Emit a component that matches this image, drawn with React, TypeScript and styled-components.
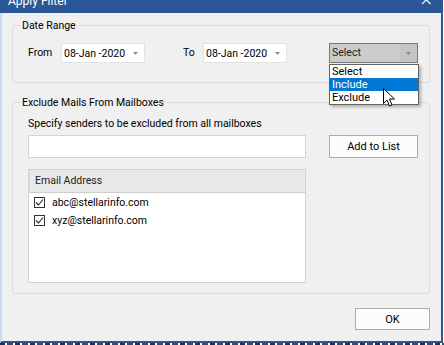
import React from "react";
import styled, { createGlobalStyle } from "styled-components";

const Global = createGlobalStyle`
  html, body { margin: 0; padding: 0; background: #ffffff; }
  body {
    font-family: Roboto, "Liberation Sans", Arial, sans-serif;
    font-size: 10.5px;
    color: #000;
  }
  * { box-sizing: border-box; }
`;

const Screen = styled.div`
  width: 444px;
  height: 345px;
  overflow: hidden;
  background: #ffffff;
  display: flex;
  flex-direction: column;
`;

const Window = styled.div`
  width: 443px;
  height: 343px;
  flex: none;
  display: flex;
  flex-direction: column;
  background: #f0f0f0;
  border-left: 2px solid #c9dcf1;
  border-right: 2px solid #2b5797;
  border-bottom: 2px solid #2b5797;
`;

const UnderStrip = styled.div`
  height: 2px;
  width: 444px;
  background: repeating-linear-gradient(
    90deg,
    #1d2f55 0 5px,
    #ffffff 5px 7px,
    #3a4a6a 7px 13px,
    #ffffff 13px 15px
  );
`;

const TitleBar = styled.div`
  height: 13px;
  flex: none;
  margin: 0 -2px;
  background: #2b5797;
  display: flex;
  align-items: flex-start;
  justify-content: space-between;
  padding: 0 12px 0 8px;
  overflow: hidden;
`;

const TitleText = styled.span`
  color: #ffffff;
  font-size: 12px;
  line-height: 12px;
  margin-top: -5px;
`;

const CloseGlyph = styled.svg`
  display: block;
  width: 9px;
  height: 5px;
`;

const Body = styled.div`
  flex: 1;
  display: flex;
  flex-direction: column;
  padding: 6px 11px 0 10px;
`;

const GroupBox = styled.fieldset<{ $h: number; $pt: number }>`
  margin: 0;
  min-width: 0;
  height: ${(p) => p.$h}px;
  border: 1px solid #dcdcdc;
  border-radius: 3px;
  padding: ${(p) => p.$pt}px 0 0 15px;
  display: flex;
  flex-direction: column;
  & + & {
    margin-top: 13px;
  }
`;

const Legend = styled.legend`
  padding: 0 2px;
  margin-left: -8px;
  line-height: 13px;
`;

const DateRow = styled.div`
  display: flex;
  align-items: center;
  height: 20px;
`;

const FieldLabel = styled.span<{ $w: number; $ml?: number }>`
  width: ${(p) => p.$w}px;
  margin-left: ${(p) => p.$ml ?? 0}px;
  flex: none;
  line-height: 20px;
`;

const DateBox = styled.div`
  width: 84px;
  height: 20px;
  flex: none;
  background: #ffffff;
  border: 1px solid #e2e2e2;
  display: flex;
  align-items: center;
  justify-content: space-between;
  padding: 0 6px 0 2px;
`;

const SmallArrow = styled.svg`
  display: block;
  width: 5px;
  height: 3px;
`;

const SelectWrap = styled.div`
  position: relative;
  margin-left: 42px;
  width: 89px;
  height: 20px;
  flex: none;
`;

const SelectBox = styled.div`
  width: 100%;
  height: 100%;
  background: #cccccc;
  border: 1px solid #7a7a7a;
  display: flex;
  align-items: stretch;
`;

const SelectText = styled.span`
  flex: 1;
  padding-left: 2px;
  line-height: 18px;
  color: #222;
`;

const SelectArrowCell = styled.span`
  width: 17px;
  background: #c4c4c4;
  display: flex;
  align-items: center;
  justify-content: center;
`;

const Dropdown = styled.ul`
  position: absolute;
  top: 21px;
  left: 0;
  width: 90px;
  margin: 0;
  padding: 0;
  list-style: none;
  background: #ffffff;
  border: 1px solid #646464;
  box-shadow: 2px 2px 3px rgba(0, 0, 0, 0.28);
  z-index: 2;
`;

const Option = styled.li<{ $active?: boolean }>`
  height: 13px;
  line-height: 13px;
  padding-left: 2px;
  font-size: 11px;
  background: ${(p) => (p.$active ? "#0078d7" : "transparent")};
  color: ${(p) => (p.$active ? "#ffffff" : "#000000")};
`;

const Cursor = styled.svg`
  position: absolute;
  left: 53px;
  top: 23px;
  width: 12px;
  height: 19px;
  z-index: 3;
`;

const Hint = styled.div`
  line-height: 13px;
`;

const InputRow = styled.div`
  display: flex;
  margin-top: 5px;
`;

const TextInput = styled.div`
  width: 278px;
  height: 23px;
  background: #ffffff;
  border: 1px solid #d4d4d4;
`;

const Button = styled.button<{ $w: number; $h: number }>`
  width: ${(p) => p.$w}px;
  height: ${(p) => p.$h}px;
  background: #fcfcfc;
  border: 1px solid #adadad;
  font-family: inherit;
  font-size: 11px;
  color: #000;
  padding: 0;
`;

const AddButton = styled(Button)`
  margin-left: 23px;
`;

const ListBox = styled.div`
  margin-top: 11px;
  width: 278px;
  height: 114px;
  background: #ffffff;
  border: 1px solid #d2d2d2;
  display: flex;
  flex-direction: column;
`;

const ListHeader = styled.div`
  height: 23px;
  background: #e9e9e9;
  border-bottom: 1px solid #cdcdcd;
  border-left: 1px solid #d8d8d8;
  padding-left: 5px;
  line-height: 22px;
  color: #222;
`;

const Rows = styled.div`
  padding-top: 1px;
`;

const Row = styled.div`
  height: 17.5px;
  display: flex;
  align-items: center;
  padding-left: 5px;
`;

const CheckBox = styled.span`
  width: 11px;
  height: 11px;
  border: 1px solid #333333;
  background: #ffffff;
  display: flex;
  align-items: center;
  justify-content: center;
  margin-right: 7px;
`;

const Footer = styled.div`
  display: flex;
  justify-content: flex-end;
  margin-top: 14px;
`;

const emails = ["abc@stellarinfo.com", "xyz@stellarinfo.com"];

const Arrow = () => (
  <SmallArrow viewBox="0 0 5 3">
    <path d="M0 0h5L2.5 3z" fill="#8a8a8a" />
  </SmallArrow>
);

export default function App() {
  return (
    <>
      <Global />
      <Screen>
        <Window>
          <TitleBar>
            <TitleText>Apply Filter</TitleText>
            <CloseGlyph viewBox="0 0 9 5">
              <path d="M0 -4.5L8.5 4M8.5 -4.5L0 4" stroke="#ffffff" strokeWidth="1.2" />
            </CloseGlyph>
          </TitleBar>
          <Body>
            <GroupBox $h={64} $pt={11}>
              <Legend>Date Range</Legend>
              <DateRow>
                <FieldLabel $w={33}>From</FieldLabel>
                <DateBox>
                  <span>08-Jan -2020</span>
                  <Arrow />
                </DateBox>
                <FieldLabel $w={20} $ml={38}>To</FieldLabel>
                <DateBox>
                  <span>08-Jan -2020</span>
                  <Arrow />
                </DateBox>
                <SelectWrap>
                  <SelectBox>
                    <SelectText>Select</SelectText>
                    <SelectArrowCell>
                      <Arrow />
                    </SelectArrowCell>
                  </SelectBox>
                  <Dropdown>
                    <Option>Select</Option>
                    <Option $active>Include</Option>
                    <Option>Exclude</Option>
                    <Cursor viewBox="0 0 12 19">
                      <path
                        d="M0.5 0.5V15.5L4 12L6.5 18L9 17L6.5 11H11.5Z"
                        fill="#ffffff"
                        stroke="#000000"
                        strokeWidth="1"
                        strokeLinejoin="miter"
                      />
                    </Cursor>
                  </Dropdown>
                </SelectWrap>
              </DateRow>
            </GroupBox>
            <GroupBox $h={198} $pt={8}>
              <Legend>Exclude Mails From Mailboxes</Legend>
              <Hint>Specify senders to be excluded from all mailboxes</Hint>
              <InputRow>
                <TextInput />
                <AddButton $w={89} $h={23}>Add to List</AddButton>
              </InputRow>
              <ListBox>
                <ListHeader>Email Address</ListHeader>
                <Rows>
                  {emails.map((e) => (
                    <Row key={e}>
                      <CheckBox>
                        <svg width="9" height="9" viewBox="0 0 9 9">
                          <path d="M1 4.5L3.5 7L8 1.5" fill="none" stroke="#222" strokeWidth="1.1" />
                        </svg>
                      </CheckBox>
                      {e}
                    </Row>
                  ))}
                </Rows>
              </ListBox>
            </GroupBox>
            <Footer>
              <Button $w={75} $h={22}>OK</Button>
            </Footer>
          </Body>
        </Window>
        <UnderStrip />
      </Screen>
    </>
  );
}
